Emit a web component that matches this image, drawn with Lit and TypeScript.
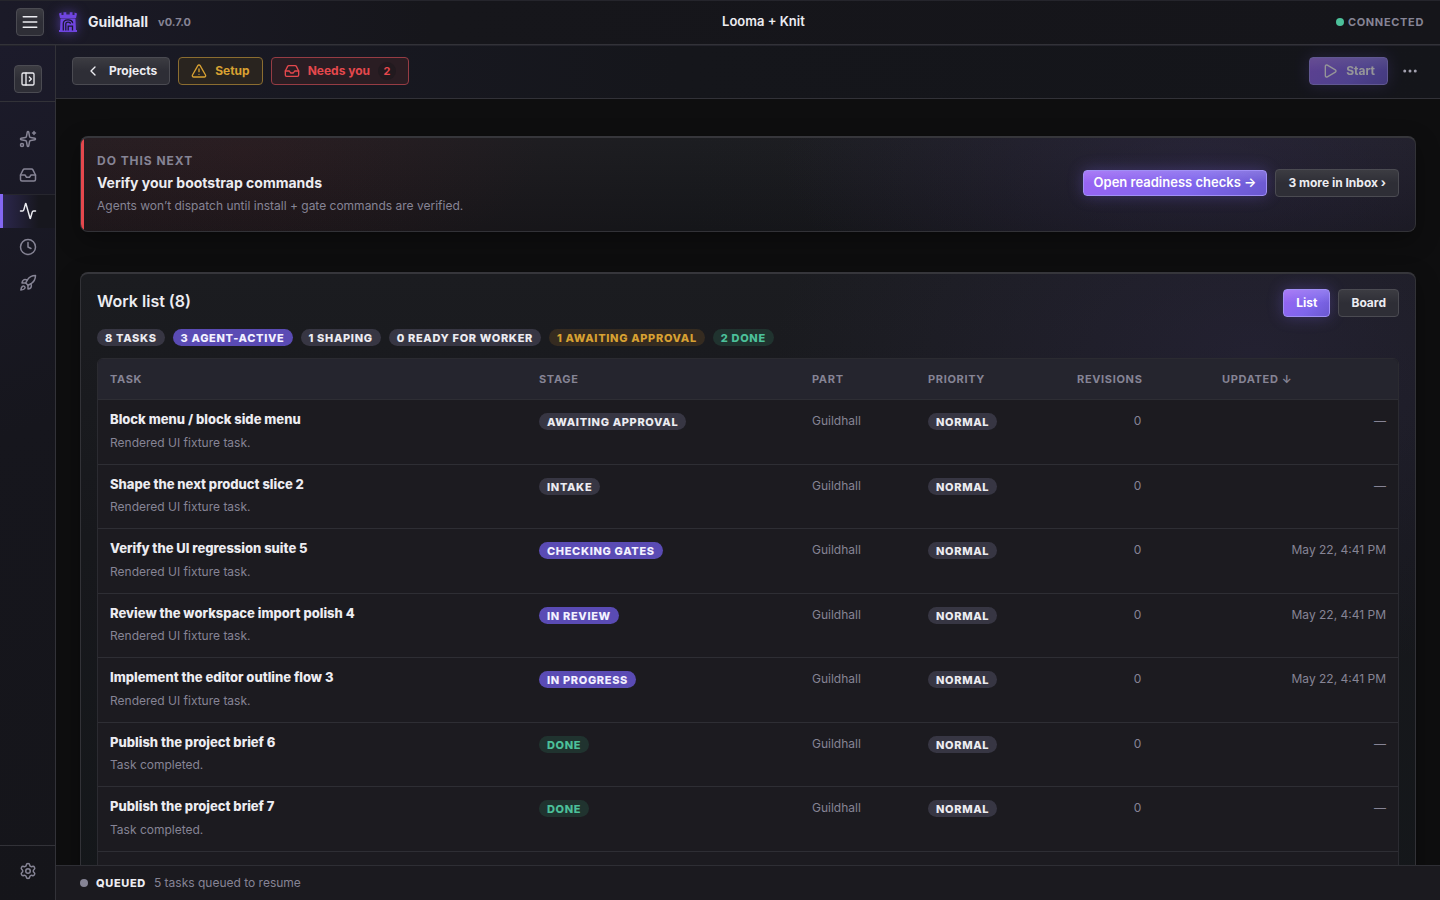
import { LitElement, html, css, svg } from "lit";
import { customElement, property } from "lit/decorators.js";
import { classMap } from "lit/directives/class-map.js";

const ICONS: Record<string, unknown> = {
  menu: svg`<path d="M3 5h18M3 12h18M3 19h18"/>`,
  panel: svg`<rect width="18" height="18" x="3" y="3" rx="2"/><path d="M9 3v18M14 9l3 3-3 3"/>`,
  sparkles: svg`<path d="M11.017 2.814a1 1 0 0 1 1.966 0l1.051 5.558a2 2 0 0 0 1.594 1.594l5.558 1.051a1 1 0 0 1 0 1.966l-5.558 1.051a2 2 0 0 0-1.594 1.594l-1.051 5.558a1 1 0 0 1-1.966 0l-1.051-5.558a2 2 0 0 0-1.594-1.594l-5.558-1.051a1 1 0 0 1 0-1.966l5.558-1.051a2 2 0 0 0 1.594-1.594z"/><path d="M20 2v4M22 4h-4"/><circle cx="4" cy="20" r="2"/>`,
  inbox: svg`<path d="M22 12h-6l-2 3h-4l-2-3H2"/><path d="M5.45 5.11 2 12v6a2 2 0 0 0 2 2h16a2 2 0 0 0 2-2v-6l-3.45-6.89A2 2 0 0 0 16.76 4H7.24a2 2 0 0 0-1.79 1.11z"/>`,
  activity: svg`<path d="M22 12h-2.48a2 2 0 0 0-1.93 1.46l-2.35 8.36a.25.25 0 0 1-.48 0L9.24 2.18a.25.25 0 0 0-.48 0l-2.35 8.36A2 2 0 0 1 4.49 12H2"/>`,
  clock: svg`<circle cx="12" cy="12" r="10"/><path d="M12 6v6l4 2"/>`,
  rocket: svg`<path d="M4.5 16.5c-1.5 1.26-2 5-2 5s3.74-.5 5-2c.71-.84.7-2.13-.09-2.91a2.18 2.18 0 0 0-2.91-.09z"/><path d="m12 15-3-3a22 22 0 0 1 2-3.95A12.88 12.88 0 0 1 22 2c0 2.72-.78 7.5-6 11a22.35 22.35 0 0 1-4 2z"/><path d="M9 12H4s.55-3.03 2-4c1.62-1.08 5 0 5 0M12 15v5s3.03-.55 4-2c1.08-1.62 0-5 0-5"/>`,
  settings: svg`<path d="M9.671 4.136a2.34 2.34 0 0 1 4.659 0 2.34 2.34 0 0 0 3.319 1.915 2.34 2.34 0 0 1 2.33 4.033 2.34 2.34 0 0 0 0 3.831 2.34 2.34 0 0 1-2.33 4.033 2.34 2.34 0 0 0-3.319 1.915 2.34 2.34 0 0 1-4.659 0 2.34 2.34 0 0 0-3.32-1.915 2.34 2.34 0 0 1-2.33-4.033 2.34 2.34 0 0 0 0-3.831A2.34 2.34 0 0 1 6.35 6.051a2.34 2.34 0 0 0 3.319-1.915"/><circle cx="12" cy="12" r="3"/>`,
  back: svg`<path d="m15 18-6-6 6-6"/>`,
  warning: svg`<path d="m21.73 18-8-14a2 2 0 0 0-3.48 0l-8 14A2 2 0 0 0 4 21h16a2 2 0 0 0 1.73-3M12 9v4M12 17h.01"/>`,
  play: svg`<path d="M5 5a2 2 0 0 1 3.008-1.728l11.997 6.998a2 2 0 0 1 .003 3.458l-12 7A2 2 0 0 1 5 19z"/>`,
  more: svg`<circle cx="12" cy="12" r="1"/><circle cx="19" cy="12" r="1"/><circle cx="5" cy="12" r="1"/>`,
};

@customElement("gh-icon")
export class GhIcon extends LitElement {
  @property() name = "";
  static styles = css`
    :host { display: block; width: 16px; height: 16px; flex: none; }
    .glyph { display: block; width: 100%; height: 100%; fill: none; stroke: currentColor; stroke-width: 2; stroke-linecap: round; stroke-linejoin: round; }
  `;
  render() {
    return html`<svg class="glyph" viewBox="0 0 24 24" aria-hidden="true">${ICONS[this.name]}</svg>`;
  }
}

interface Task {
  title: string;
  note: string;
  stage: string;
  tone: string;
  updated: string;
}

const FIXTURE = "Rendered UI fixture task.";
const STAMP = "May 22, 4:41 PM";
const TASKS: Task[] = [
  { title: "Block menu / block side menu", note: FIXTURE, stage: "Awaiting approval", tone: "neutral", updated: "—" },
  { title: "Shape the next product slice 2", note: FIXTURE, stage: "Intake", tone: "neutral", updated: "—" },
  { title: "Verify the UI regression suite 5", note: FIXTURE, stage: "Checking gates", tone: "accent", updated: STAMP },
  { title: "Review the workspace import polish 4", note: FIXTURE, stage: "In review", tone: "accent", updated: STAMP },
  { title: "Implement the editor outline flow 3", note: FIXTURE, stage: "In progress", tone: "accent", updated: STAMP },
  { title: "Publish the project brief 6", note: "Task completed.", stage: "Done", tone: "ok", updated: "—" },
  { title: "Publish the project brief 7", note: "Task completed.", stage: "Done", tone: "ok", updated: "—" },
  { title: "Publish the project brief 8", note: "Task completed.", stage: "Done", tone: "ok", updated: "—" },
];

const CHIPS: [string, string][] = [
  ["8 tasks", "neutral"],
  ["3 agent-active", "accent"],
  ["1 shaping", "neutral"],
  ["0 ready for worker", "neutral"],
  ["1 awaiting approval", "warn"],
  ["2 done", "ok"],
];

const NAV: [string, string][] = [
  ["sparkles", "Overview"],
  ["inbox", "Inbox"],
  ["activity", "Work"],
  ["clock", "History"],
  ["rocket", "Releases"],
];

@customElement("app-root")
export class AppRoot extends LitElement {
  static styles = css`
    :host {
      display: grid;
      grid-template: auto minmax(0, 1fr) / 56px minmax(0, 1fr);
      height: 100vh;
      box-sizing: border-box;
      background: #0e0e0f;
      color: #ececf1;
      font-family: Inter, "Liberation Sans", sans-serif;
      font-size: 13px;
      line-height: 1.5;
      --line: #323238;
      --muted: #868495;
    }
    *, *::before, *::after { box-sizing: border-box; }
    h1, h2, p { margin: 0; font-size: inherit; }
    button { font: inherit; color: inherit; cursor: pointer; }
    a { color: inherit; text-decoration: none; }

    .topbar {
      grid-column: 1 / -1;
      display: flex;
      justify-content: space-between;
      align-items: center;
      padding: 7px 16px 8px;
      border-top: 1px solid #25252c;
      border-bottom: 1px solid var(--line);
      background: linear-gradient(90deg, #1b1a28 0, #16161b 30%, #15151a 100%);
    }
    .brand { display: flex; align-items: center; }
    .logo { display: block; width: 24px; height: 24px; margin: 0 8px 0 12px; filter: drop-shadow(0 0 6px #6a4bd8aa); }
    .name { font-size: 14px; line-height: 20px; font-weight: 700; }
    .version { margin-left: 10px; font-size: 11px; font-weight: 700; color: var(--muted); }
    .project { font-size: 13px; font-weight: 600; }
    .connection { display: flex; align-items: center; gap: 4px; font-size: 11px; font-weight: 700; letter-spacing: 0.06em; color: var(--muted); text-transform: uppercase; }
    .dot { width: 8px; height: 8px; border-radius: 50%; background: #4cc09a; }

    .btn {
      display: inline-flex;
      align-items: center;
      justify-content: center;
      gap: 8px;
      height: 28px;
      padding: 0 12px;
      border: 1px solid #4b4b52;
      border-radius: 4px;
      background: linear-gradient(#3c3c42, #2e2e36 50%, #2e2e36);
      font-size: 12px;
      font-weight: 700;
      white-space: nowrap;
    }
    .square { width: 28px; padding: 0; }
    .medium { width: 18px; height: 18px; }
    .primary {
      border-color: #a08ff5;
      background: linear-gradient(#ffffff28, #ffffff00 50%), linear-gradient(135deg, #9a64f4, #7f66ec 60%, #6a58cf);
      color: #fff;
      box-shadow: 0 0 16px #7a62e855;
    }
    .large { height: 26px; padding: 0 10px; font-size: 13px; font-weight: 600; }
    .warning { border-color: #8b6d30; background: #29241f; color: #d8a132; }
    .danger { border-color: #963c44; background: #2a1d23; color: #e5484d; }
    .count { display: inline-flex; align-items: center; justify-content: center; width: 18px; height: 18px; border-radius: 9px; background: #221a1f; font-size: 11px; }
    .start:disabled { opacity: 0.55; cursor: default; }

    .rail {
      display: flex;
      flex-direction: column;
      border-right: 1px solid var(--line);
      background: linear-gradient(160deg, #1c1b2b 0, #16161d 45%, #15151a 100%);
      box-shadow: inset 0 1px #24242c;
    }
    .toggle { display: flex; justify-content: center; align-items: flex-end; height: 57px; padding-bottom: 8px; border-bottom: 1px solid var(--line); }
    .nav { display: flex; flex-direction: column; gap: 2px; padding-top: 20px; }
    .link { display: flex; align-items: center; justify-content: center; height: 34px; color: var(--muted); }
    .active { color: #ececf1; background: linear-gradient(90deg, #2d2850, #17171e 70%); box-shadow: inset 3px 0 #8467f2, inset 0 1px #26262e; }
    .bottom { margin-top: auto; padding: 8px 0 12px; border-top: 1px solid var(--line); }

    .main { display: grid; grid-template-rows: auto minmax(0, 1fr) auto; min-width: 0; }
    .toolbar {
      display: flex;
      align-items: center;
      gap: 8px;
      padding: 12px 16px 13px;
      border-bottom: 1px solid var(--line);
      background: linear-gradient(90deg, #1a1a26, #15161b 45%, #14151a);
      box-shadow: inset 0 1px #24242c;
    }
    .spacer { flex: 1; }
    .more { display: flex; align-items: center; justify-content: center; width: 28px; height: 28px; padding: 0; border: 0; background: none; color: #a3a1b0; }

    .content { overflow-y: auto; scrollbar-width: none; padding: 37px 24px 0; display: flex; flex-direction: column; gap: 40px; }
    .card { flex: none; border: 1px solid #323237; border-top: 2px solid #36363b; border-radius: 8px; box-shadow: 0 8px 24px #00000055; }
    .next {
      position: relative;
      overflow: hidden;
      display: flex;
      align-items: center;
      gap: 8px;
      padding: 13px 16px 16px;
      min-height: 96px;
      background:
        radial-gradient(ellipse 300px 130px at 12% 15%, #5a1c2224, #5a1c2200),
        radial-gradient(ellipse 420px 180px at 84% 25%, #3a2f6050, #3a2f6000),
        linear-gradient(#ffffff06, #00000018),
        linear-gradient(90deg, #1f191d, #1b181c 25%, #17181c 45%, #1a1a20);
    }
    .next::before { content: ""; position: absolute; inset: -1px auto 0 0; width: 3px; background: #e5484d; }
    .copy { flex: 1; min-width: 0; }
    .eyebrow { font-size: 12px; line-height: 18px; font-weight: 700; letter-spacing: 0.08em; color: var(--muted); text-transform: uppercase; }
    .headline { margin-top: 3px; font-size: 14px; line-height: 20px; font-weight: 700; }
    .detail { margin-top: 4px; font-size: 12px; line-height: 18px; color: var(--muted); }

    .work {
      padding: 15px 16px 16px;
      background:
        radial-gradient(ellipse 480px 320px at 88% 12%, #3a305f48, #3a305f00),
        linear-gradient(#1b1c20, #17181c 40%, #14171a);
    }
    .workhead { display: flex; align-items: flex-start; gap: 8px; }
    .title { flex: 1; font-size: 16px; line-height: 24px; font-weight: 600; }
    .chips { display: flex; gap: 8px; margin: 12px 0; }
    .chip { display: inline-block; padding: 1px 8px 0; border-radius: 9px; font-size: 11px; line-height: 16px; font-weight: 800; letter-spacing: 0.06em; text-transform: uppercase; white-space: nowrap; }
    .neutral { background: #373643; color: #ececf1; }
    .accent { background: #5a4bb4; color: #f3f1ff; }
    .warn { background: #352b20; color: #d8a132; }
    .ok { background: #20332f; color: #4cc09a; }

    .frame { border: 1px solid #2b2b31; border-radius: 6px; overflow: hidden; background: #1c1b20; }
    .table { width: 100%; border-collapse: separate; border-spacing: 0; table-layout: fixed; }
    .table th { height: 41px; padding: 0 12px; text-align: left; font-size: 11px; font-weight: 700; letter-spacing: 0.06em; color: var(--muted); text-transform: uppercase; background: #25252e; border-bottom: 1px solid #2e2e34; }
    .table td { padding: 12px 12px 0; vertical-align: top; font-size: 12px; color: var(--muted); border-bottom: 1px solid #2e2e34; }
    .table td.summary { padding: 10px 12px 12px; }
    .table td.tag { padding-top: 13px; }
    .table td.revisions { text-align: center; }
    .table td.updated { text-align: right; }
    .c-stage { width: 21%; }
    .c-part { width: 116px; }
    .c-priority { width: 149px; }
    .c-rev { width: 145px; }
    .c-updated { width: 188px; }
    .task { font-size: 13px; font-weight: 800; color: #ececf1; }
    .note { margin-top: 4px; }

    .status { display: flex; align-items: center; gap: 8px; height: 35px; padding: 0 24px; border-top: 1px solid #2e2e34; background: #1b1a1f; font-size: 12px; color: var(--muted); }
    .idle { background: var(--muted); }
    .state { font-size: 11px; font-weight: 800; letter-spacing: 0.06em; color: #ececf1; text-transform: uppercase; }
  `;

  render() {
    return html`
      <header class="topbar">
        <div class="brand">
          <button class="btn square" aria-label="Menu"><gh-icon class="medium" name="menu"></gh-icon></button>
          <svg class="logo" viewBox="0 0 24 24" aria-hidden="true">
            <path fill="#6f45e0" d="M3 3.5 5.5 2.6V5h2V2.2h2.8v2.4h3.4V2.2h2.8V5h2V2.6L21 3.500 20 8H4z" />
            <path fill="#6f45e0" d="M4.600 8.600h14.800L20 20h1v2H3v-2h1z" />
            <path fill="none" stroke="#1b1832" stroke-width="1.300" d="M7.300 20.500V13.500C7.300 8.600 16.700 8.600 16.700 13.200M9.800 20.500V14c0-2.600 4.600-2.400 4.600-.2M12.200 20.500v-4.300h4.300v4.300" />
          </svg>
          <span class="name">Guildhall</span>
          <span class="version">v0.7.0</span>
        </div>
        <h1 class="project">Looma + Knit</h1>
        <div class="connection"><span class="dot"></span>Connected</div>
      </header>
      <aside class="rail">
        <div class="toggle"><button class="btn square" aria-label="Expand sidebar"><gh-icon name="panel"></gh-icon></button></div>
        <nav class="nav">
          ${NAV.map(([icon, label]) => html`
            <a class=${classMap({ link: true, active: icon === "activity" })} href="#" aria-label=${label}><gh-icon class="medium" name=${icon}></gh-icon></a>`)}
        </nav>
        <div class="bottom"><a class="link" href="#" aria-label="Settings"><gh-icon class="medium" name="settings"></gh-icon></a></div>
      </aside>
      <main class="main">
        <div class="toolbar">
          <button class="btn"><gh-icon name="back"></gh-icon>Projects</button>
          <button class="btn warning"><gh-icon name="warning"></gh-icon>Setup</button>
          <button class="btn danger"><gh-icon name="inbox"></gh-icon>Needs you<span class="count">2</span></button>
          <span class="spacer"></span>
          <button class="btn primary start" disabled><gh-icon name="play"></gh-icon>Start</button>
          <button class="more" aria-label="More actions"><gh-icon class="medium" name="more"></gh-icon></button>
        </div>
        <div class="content">
          <section class="card next">
            <div class="copy">
              <p class="eyebrow">Do this next</p>
              <h2 class="headline">Verify your bootstrap commands</h2>
              <p class="detail">Agents won’t dispatch until install + gate commands are verified.</p>
            </div>
            <button class="btn primary large">Open readiness checks →</button>
            <button class="btn">3 more in Inbox ›</button>
          </section>
          <section class="card work">
            <div class="workhead">
              <h2 class="title">Work list (8)</h2>
              <button class="btn primary">List</button>
              <button class="btn">Board</button>
            </div>
            <div class="chips">${CHIPS.map(([text, tone]) => html`<span class="chip ${tone}">${text}</span>`)}</div>
            <div class="frame">
              <table class="table">
                <thead>
                  <tr>
                    <th>Task</th>
                    <th class="c-stage">Stage</th>
                    <th class="c-part">Part</th>
                    <th class="c-priority">Priority</th>
                    <th class="c-rev">Revisions</th>
                    <th class="c-updated">Updated ↓</th>
                  </tr>
                </thead>
                <tbody>
                  ${TASKS.map((t) => html`
                    <tr>
                      <td class="summary"><div class="task">${t.title}</div><div class="note">${t.note}</div></td>
                      <td class="tag"><span class="chip ${t.tone}">${t.stage}</span></td>
                      <td>Guildhall</td>
                      <td class="tag"><span class="chip neutral">Normal</span></td>
                      <td class="revisions">0</td>
                      <td class="updated">${t.updated}</td>
                    </tr>`)}
                </tbody>
              </table>
            </div>
          </section>
        </div>
        <footer class="status"><span class="dot idle"></span><span class="state">Queued</span><span>5 tasks queued to resume</span></footer>
      </main>
    `;
  }
}
